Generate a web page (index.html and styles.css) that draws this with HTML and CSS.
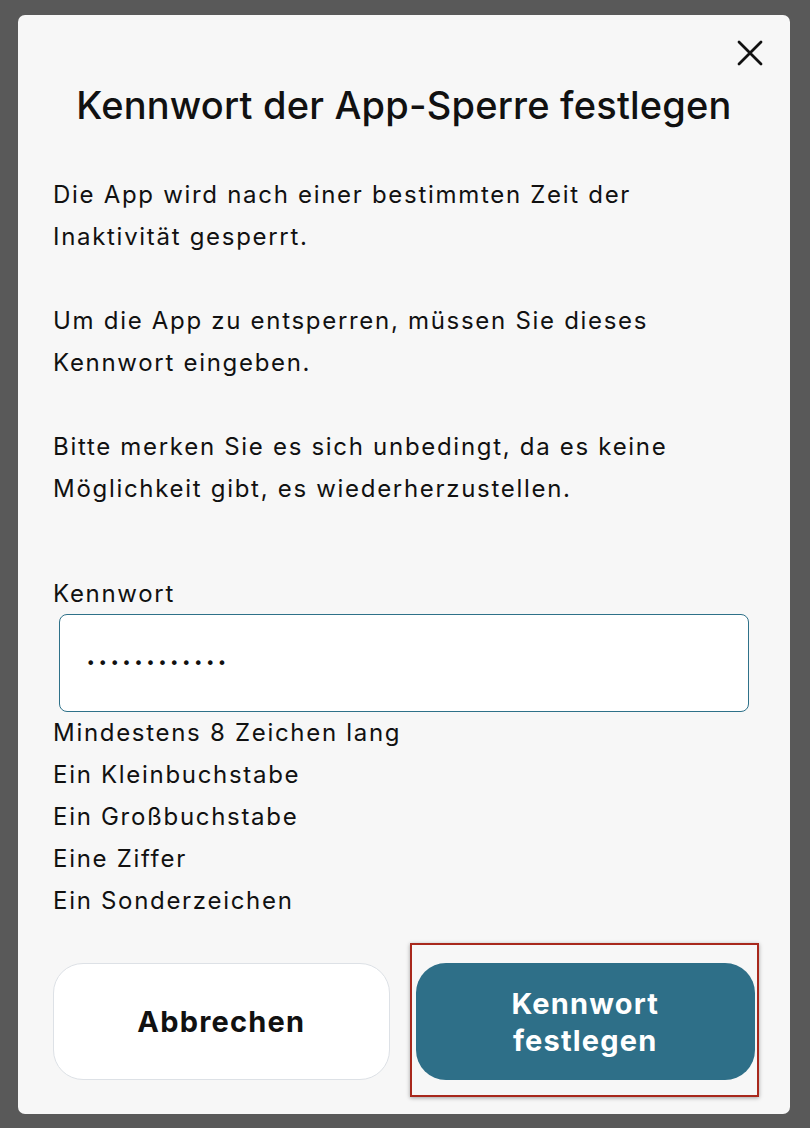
FILE: index.html
```html
<!DOCTYPE html>
<html lang="de">
<head>
    <meta charset="UTF-8">
    <meta name="viewport" content="width=device-width, initial-scale=1.0">
    <title>Kennwort der App-Sperre festlegen</title>
    <link rel="stylesheet" href="styles.css">
</head>
<body>
    <div class="dialog">
        <div class="close-row">
            <button class="close-btn" aria-label="Schließen">
                <svg width="26" height="26" viewBox="0 0 26 26">
                    <path d="M2 2 L24 24 M24 2 L2 24" stroke="#111" stroke-width="2.8" stroke-linecap="round" fill="none"/>
                </svg>
            </button>
        </div>

        <h2>Kennwort der App-Sperre festlegen</h2>

        <div class="intro">
            <p>Die App wird nach einer bestimmten Zeit der Inaktivität gesperrt.</p>
            <p>Um die App zu entsperren, müssen Sie dieses Kennwort eingeben.</p>
            <p>Bitte merken Sie es sich unbedingt, da es keine Möglichkeit gibt, es wiederherzustellen.</p>
        </div>

        <form id="lockForm" action="#" method="post">
            <label for="password" class="field-label">Kennwort</label>
            <input type="password" id="password" name="password" value="abcdefghijkl">

            <ul class="rules">
                <li>Mindestens 8 Zeichen lang</li>
                <li>Ein Kleinbuchstabe</li>
                <li>Ein Großbuchstabe</li>
                <li>Eine Ziffer</li>
                <li>Ein Sonderzeichen</li>
            </ul>

            <div class="actions">
                <button type="button" class="btn btn-cancel">Abbrechen</button>
                <div class="highlight-wrap">
                    <button type="submit" class="btn btn-primary">Kennwort<br>festlegen</button>
                    <span class="highlight"></span>
                </div>
            </div>
        </form>
    </div>
</body>
</html>
```

FILE: styles.css
```css
* {
    box-sizing: border-box;
}

body, h2, p, ul {
    margin: 0;
    padding: 0;
}

body {
    font-family: Inter, "Noto Sans", Arial, sans-serif;
    background-color: #595959;
    color: #111;
    height: 100vh;
    padding: 15px 20px 14px 18px;
}

.dialog {
    background-color: #f7f7f7;
    border-radius: 7px;
    height: 100%;
    padding: 25px 35px 0 35px;
}

.close-row {
    display: flex;
    justify-content: flex-end;
}

.close-btn {
    background: none;
    border: none;
    padding: 0;
    margin-right: -8px;
    width: 26px;
    height: 26px;
    cursor: pointer;
}

.dialog h2 {
    text-align: center;
    font-size: 38px;
    font-weight: 500;
    letter-spacing: 0.2px;
    margin-top: 16px;
    line-height: 46px;
}

.intro {
    margin-top: 46px;
    font-size: 24px;
    line-height: 42px;
    letter-spacing: 1.7px;
}

.intro p {
    margin-bottom: 42px;
}

.intro p:last-child {
    margin-bottom: 0;
}

.field-label {
    display: block;
    font-size: 24px;
    line-height: 42px;
    letter-spacing: 1.7px;
    margin-top: 63px;
}

#password {
    display: block;
    width: calc(100% - 12px);
    margin: -1px 6px 0;
    height: 98px;
    padding: 0 26px;
    border: 1.5px solid #2e7189;
    border-radius: 8px;
    background-color: #ffffff;
    font-family: "DejaVu Sans", sans-serif;
    font-size: 16px;
    letter-spacing: 2.5px;
    color: #111;
}

.rules {
    list-style: none;
    font-size: 24px;
    line-height: 42px;
    letter-spacing: 1.7px;
}

.actions {
    display: flex;
    gap: 26px;
    margin-top: 41px;
}

.btn {
    height: 117px;
    border-radius: 30px;
    font-family: inherit;
    font-size: 29px;
    font-weight: 700;
    line-height: 37px;
    letter-spacing: 1.2px;
    cursor: pointer;
}

.btn-cancel {
    width: 337px;
    background-color: #ffffff;
    color: #111;
    border: 1.5px solid #dde1e6;
}

.highlight-wrap {
    position: relative;
    width: 340px;
}

.btn-primary {
    width: 100%;
    background-color: #2e6f88;
    color: #ffffff;
    border: none;
}

.highlight {
    position: absolute;
    left: -6px;
    top: -20px;
    right: -4px;
    bottom: -17px;
    border: 2.5px solid #a8281c;
    box-shadow: 0 1px 4px rgba(0, 0, 0, 0.35);
    pointer-events: none;
}
```
